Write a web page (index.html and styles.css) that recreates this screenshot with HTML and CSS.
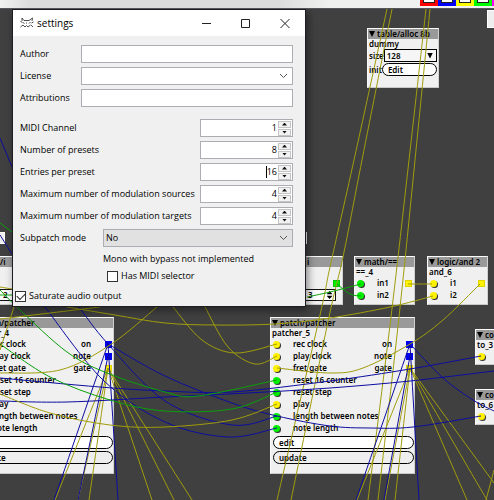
FILE: index.html
```html
<!DOCTYPE html>
<html lang="en">
<head>
<meta charset="utf-8">
<title>settings</title>
<link rel="stylesheet" href="styles.css">
</head>
<body>
<header class="toolbar">
  <div class="swatches">
    <button class="swatch red" aria-label="Red"></button>
    <button class="swatch blue" aria-label="Blue"></button>
    <button class="swatch yellow" aria-label="Yellow"></button>
    <button class="swatch green" aria-label="Green"></button>
    <button class="swatch magenta" aria-label="Magenta"></button>
  </div>
</header>
<main class="canvas">
  <div class="panel panel-corner"></div>
  <div class="panel panel-left"></div>
  <div class="panel panel-mid"></div>

  <section class="node node-table">
    <h2><i class="tri"></i>table/alloc 8b</h2>
    <p class="name">dummy</p>
    <div class="field"><label for="size">size</label>
      <span class="picker"><select id="size"><option>128</option></select><i class="tri"></i></span></div>
    <div class="field"><span>init</span><button class="pill">Edit</button></div>
  </section>

  <section class="node node-cut-left">
    <h2>/i</h2>
    <p class="name">&nbsp;</p>
    <div class="row"></div>
    <div class="count"><span>2</span></div>
  </section>

  <section class="node node-cut-mid">
    <h2>i</h2>
    <p class="name">&nbsp;</p>
    <div class="row"><b class="out green"></b></div>
    <div class="count"><span>3</span><i class="updown"></i></div>
  </section>

  <section class="node node-math">
    <h2><i class="tri"></i>math/==</h2>
    <p class="name">==_4</p>
    <div class="row"><b class="in green"></b><span>in1</span><b class="out yellow"></b></div>
    <div class="row"><b class="in green"></b><span>in2</span></div>
  </section>

  <section class="node node-logic">
    <h2><i class="tri"></i>logic/and 2</h2>
    <p class="name">and_6</p>
    <div class="row"><b class="in yellow"></b><span>i1</span><b class="out yellow"></b></div>
    <div class="row"><b class="in yellow"></b><span>i2</span></div>
  </section>

  <section class="node patcher node-patcher4">
    <h2><i class="tri"></i>patch/patcher</h2>
    <p class="name">patcher_4</p>
    <div class="row"><b class="in yellow"></b><span>rec clock</span><em>on</em><b class="out blue"></b></div>
    <div class="row"><b class="in yellow"></b><span>play clock</span><em>note</em><b class="out blue"></b></div>
    <div class="row"><b class="in yellow"></b><span>fret gate</span><em>gate</em><b class="out yellow"></b></div>
    <div class="row"><b class="in green"></b><span>reset 16 counter</span></div>
    <div class="row"><b class="in green"></b><span>reset step</span></div>
    <div class="row"><b class="in yellow"></b><span>play</span></div>
    <div class="row"><b class="in green"></b><span>length between notes</span></div>
    <div class="row"><b class="in green"></b><span>note length</span></div>
    <button class="pill">edit</button>
    <button class="pill plain">update</button>
  </section>

  <section class="node patcher node-patcher5">
    <h2><i class="tri"></i>patch/patcher</h2>
    <p class="name">patcher_5</p>
    <div class="row"><b class="in yellow"></b><span>rec clock</span><em>on</em><b class="out blue"></b></div>
    <div class="row"><b class="in yellow"></b><span>play clock</span><em>note</em><b class="out blue"></b></div>
    <div class="row"><b class="in yellow"></b><span>fret gate</span><em>gate</em><b class="out yellow"></b></div>
    <div class="row"><b class="in green"></b><span>reset 16 counter</span></div>
    <div class="row"><b class="in green"></b><span>reset step</span></div>
    <div class="row"><b class="in yellow"></b><span>play</span></div>
    <div class="row"><b class="in green"></b><span>length between notes</span></div>
    <div class="row"><b class="in green"></b><span>note length</span></div>
    <button class="pill">edit</button>
    <button class="pill plain">update</button>
  </section>

  <section class="node node-to3">
    <h2><i class="tri"></i>co</h2>
    <p class="name">to_3</p>
    <div class="row"><b class="in yellow"></b></div>
  </section>
  <section class="node node-to6">
    <h2><i class="tri"></i>co</h2>
    <p class="name">to_6</p>
    <div class="row"><b class="in yellow"></b></div>
  </section>

  <svg class="wires" id="wires" aria-hidden="true"></svg>

  <form class="dialog">
    <header class="titlebar">
      <svg class="logo" viewBox="0 0 14 12" aria-hidden="true"><path d="M2 1l2 2.500h5L12.500 1 12 4M2 1v3M.5 4.500l2 1M.5 10l2.500-2M3 5.500l1.500 1M9 6.500L10.500 5M3 8l2 2 1.500-1.500L8 10l2.500-2M13.500 5l-2 1M11 8l2 2M6 6h1"/></svg>
      <h1>settings</h1>
      <button type="button" aria-label="Minimize"><svg viewBox="0 0 10 10"><path d="M0 5.500h9"/></svg></button>
      <button type="button" aria-label="Maximize"><svg viewBox="0 0 10 10"><path d="M.5 1.500h8v8h-8z"/></svg></button>
      <button type="button" aria-label="Close"><svg viewBox="0 0 10 10"><path d="M.5 1l9 9M9.500 1l-9 9"/></svg></button>
    </header>
    <div class="body">
      <div class="line text"><label for="author">Author</label><input id="author" type="text"></div>
      <div class="line text"><label for="license">License</label><span class="combo"><select id="license"><option></option></select><svg viewBox="0 0 9 6"><path d="M1 1l3.500 3.500L8 1"/></svg></span></div>
      <div class="line text"><label for="attributions">Attributions</label><input id="attributions" type="text"></div>
      <div class="line num first"><label for="midi">MIDI Channel</label><span class="spin"><input id="midi" type="number" value="1"><span class="steps"><button type="button" aria-label="Up"></button><button type="button" aria-label="Down"></button></span></span></div>
      <div class="line num"><label for="presets">Number of presets</label><span class="spin"><input id="presets" type="number" value="8"><span class="steps"><button type="button" aria-label="Up"></button><button type="button" aria-label="Down"></button></span></span></div>
      <div class="line num"><label for="entries">Entries per preset</label><span class="spin active"><input id="entries" type="number" value="16"><span class="steps"><button type="button" aria-label="Up"></button><button type="button" aria-label="Down"></button></span></span></div>
      <div class="line num"><label for="sources">Maximum number of modulation sources</label><span class="spin"><input id="sources" type="number" value="4"><span class="steps"><button type="button" aria-label="Up"></button><button type="button" aria-label="Down"></button></span></span></div>
      <div class="line num"><label for="targets">Maximum number of modulation targets</label><span class="spin"><input id="targets" type="number" value="4"><span class="steps"><button type="button" aria-label="Up"></button><button type="button" aria-label="Down"></button></span></span></div>
      <div class="line mode"><label for="mode">Subpatch mode</label><span class="combo grey"><select id="mode"><option>No</option></select><svg viewBox="0 0 9 6"><path d="M1 1l3.500 3.500L8 1"/></svg></span></div>
      <p class="note">Mono with bypass not implemented</p>
      <label class="check inset"><input type="checkbox">Has MIDI selector</label>
    </div>
    <label class="check saturate"><input type="checkbox" checked>Saturate audio output</label>
  </form>
</main>
<script src="script.js"></script>
</body>
</html>
```
FILE: styles.css
```css
* { box-sizing: border-box; }
body {
  margin: 0;
  min-height: 100vh;
  display: flex;
  flex-direction: column;
  font: 9px/12px "Open Sans", sans-serif;
  color: #000;
  background: #404040;
}
h1, h2, p { margin: 0; font: inherit; }
button, input, select { font: inherit; color: inherit; margin: 0; padding: 0; border: 0; background: none; }

.toolbar {
  height: 9px;
  background: #f0f0f0 linear-gradient(90deg, #f0f0f0, #dcdcdc 30px, #dcdcdc 280px, #f0f0f0 330px);
  border-bottom: 1px solid #55555c;
}
.swatches { display: flex; justify-content: flex-end; margin-right: -16px; }
.swatch { width: 18px; height: 6px; display: flex; justify-content: center; }
.swatch::before { content: ""; width: 10px; height: 2px; background: #fff; border: 1px solid #222; border-top: 0; }
.swatch.red { background: #f00; }
.swatch.blue { background: #00f; }
.swatch.yellow { background: #ff0; }
.swatch.green { background: #0f0; }
.swatch.magenta { background: #f0f; }

.canvas { position: relative; flex: 1; overflow: hidden; }
.wires { position: absolute; inset: 0; width: 100%; height: 100%; }
.wires path { fill: none; stroke-width: 1; }
.wires .y { stroke: #a09d0c; }
.wires .b { stroke: #0c0ca0; }
.wires .g { stroke: #0aa00a; }

.panel { position: absolute; background: #eee; border: 1px solid #fff; }
.panel-corner { left: 487px; top: 1px; width: 20px; height: 18px; }
.panel-left { left: -12px; top: 223px; width: 17px; height: 12px; }
.panel-mid { left: 290px; top: 223px; width: 17px; height: 12px; background: #aaa; }

.node {
  position: absolute;
  background: #f0f0f0;
  border: 1px solid #fafafa;
  border-right-color: #d0d0d0;
  border-bottom-color: #c8c8c8;
  font-family: "Noto Sans", sans-serif;
  font-size: 8px;
  font-weight: 600;
  white-space: nowrap;
}
.node h2 { height: 10px; line-height: 10px; background: #999; padding-left: 1px; display: flex; align-items: center; gap: 2px; }
.node .name { height: 10px; line-height: 10px; padding-left: 1px; }
.tri { width: 6px; height: 6px; background: #000; clip-path: polygon(0 0, 100% 0, 50% 100%); }
.row { display: flex; align-items: center; height: 12px; padding: 0 2px; }
.row .in { width: 7px; height: 7px; border-radius: 50%; box-shadow: 1px 1px 0 #333; margin-right: 13px; }
.row .out { width: 7px; height: 7px; margin-left: auto; }
.row em { font-style: normal; margin-left: auto; }
.row em + .out { margin-left: 14px; }
.row .green { background: #00f000; }
.row .yellow { background: #fff200; }
.row .blue { background: #0000f0; }
.row .out.yellow { border: 1px solid #e0d400; }
.row .out.green { border: 1px solid #00c800; }
.pill { display: block; text-align: left; border: 1px solid #000; border-radius: 7px; background: #fff; height: 13px; line-height: 10px; padding-left: 5px; }
.pill.plain { background: #eee; }
.patcher > .pill { width: 141px; margin: 2px 0 0 2px; }
.patcher { width: 145px; height: 157px; }
.patcher .row { padding-right: 1px; }
.node-patcher4 { left: -31px; top: 308px; }
.node-patcher5 { left: 270px; top: 308px; }
.node-math { left: 354px; top: 247px; width: 61px; height: 49px; }
.node-math .in, .node-logic .in { margin-right: 12px; }
.node-math .row span, .node-logic .row span { padding-left: 1px; }
.node-logic { left: 427px; top: 247px; width: 61px; height: 49px; }
.node-to3 { left: 475px; top: 320px; width: 60px; height: 36px; }
.node-to6 { left: 475px; top: 380px; width: 60px; height: 36px; }
.node-cut-left { left: -2px; top: 247px; width: 38px; height: 49px; }
.node-cut-mid { left: 303px; top: 247px; width: 40px; height: 49px; }
.node-cut-mid h2 { padding-left: 3px; }
.count { display: flex; align-items: center; width: 32px; border: 1px solid #111; background: #fff; height: 12px; padding-left: 3px; gap: 14px; }
.updown { width: 6px; height: 8px; background: #000; clip-path: polygon(50% 0, 100% 40%, 0 40%, 0 60%, 100% 60%, 50% 100%, 0 60%, 0 40%); }
.node-table { left: 367px; top: 19px; width: 72px; height: 60px; }
.field { display: flex; align-items: center; padding: 0 1px; height: 13px; margin-bottom: 1px; }
.field .pill { flex: 1; }
.picker { flex: 1; display: flex; align-items: center; border: 1px solid #000; height: 13px; background: #f6f6f6; padding-right: 3px; }
.picker select { flex: 1; appearance: none; padding-left: 2px; }

.dialog {
  position: absolute;
  left: 12px;
  top: 0;
  width: 294px;
  height: 298px;
  background: #f0f0f0;
  border: 1px solid #1c1c22;
  box-shadow: 2px 3px 8px #0007;
}
.titlebar { display: flex; align-items: center; height: 26px; background: #fff; padding: 0 15px 0 7px; }
.titlebar h1 { flex: 1; font-size: 10px; margin-left: 3px; }
.titlebar button { width: 10px; height: 10px; margin-left: 29px; }
.titlebar svg { display: block; fill: none; stroke: #222; }
.titlebar button svg { width: 10px; height: 10px; }
.titlebar .logo { width: 14px; height: 12px; stroke-width: .8; }

.body { padding: 9px 12px 0 7px; }
.line { display: grid; align-items: center; height: 18px; margin-bottom: 4px; }
.line label { white-space: nowrap; }
.text { grid-template-columns: 61px 1fr; }
.num { grid-template-columns: 1fr 93px; }
.mode { grid-template-columns: 83px 1fr; }
.first { margin-top: 12px; }
.line > input, .combo, .spin { display: flex; align-items: center; width: 100%; height: 18px; background: #fff; border: 1px solid #abadb3; }
.combo { padding-right: 4px; }
.combo select { flex: 1; appearance: none; padding-left: 2px; height: 16px; }
.combo svg { width: 9px; height: 6px; fill: none; stroke: #555; }
.combo.grey { background: #e1e1e1; }
.spin { position: relative; padding-right: 1px; }
.spin input { flex: 1; min-width: 0; text-align: right; appearance: textfield; padding-right: 1px; }
.spin input::-webkit-inner-spin-button { display: none; }
.spin.active::before { content: ""; position: absolute; left: 65px; top: 2px; width: 1px; height: 12px; background: #000; }
.steps { width: 13px; display: grid; gap: 1px; }
.steps button { height: 7px; border: 1px solid #c4c4c4; background: #f2f2f2; display: grid; place-items: center; }
.steps button::before { content: ""; width: 5px; height: 3px; background: #111; clip-path: polygon(50% 0, 100% 100%, 0 100%); }
.steps button + button::before { clip-path: polygon(0 0, 100% 0, 50% 100%); }
.note { padding-left: 83px; margin-top: 6px; }
.check { display: flex; align-items: center; gap: 3px; }
.check input { appearance: none; width: 11px; height: 11px; border: 1px solid #333; background: #fff; }
.check input:checked::before { content: ""; display: block; width: 7px; height: 4px; margin: 1px; border: solid #222; border-width: 0 0 1px 1px; transform: rotate(-45deg); }
.inset { margin: 5px 0 0 87px; }
.saturate { margin: 8px 0 0 2px; }
```
FILE: script.js
```js
// Wires are listed as colour class followed by the points they pass through, in window coordinates.
const TOP = 9;
const wires = [
  ["y", 387,9, 354,160, 330,267, 320,315, 277,500],
  ["y", 392,9, 362,160, 343,257, 329,317, 291,500],
  ["y", 426,9, 409,160, 391,317, 368,500],
  ["y", 430,9, 415,160, 399,317, 378,500],
  ["y", 410,368, 357,500], ["y", 410,368, 385,500], ["y", 410,368, 395,500],
  ["y", 410,368, 467,500], ["y", 410,368, 487,500], ["y", 410,368, 494,483],
  ["b", 410,344, 356,500], ["b", 410,356, 384,500], ["b", 410,344, 419,500],
  ["y", 108,368, 55,500], ["y", 108,368, 78,500], ["y", 108,368, 89,500],
  ["y", 108,368, 152,500], ["y", 108,368, 174,500], ["y", 108,368, 192,500],
  ["b", 108,344, 54,500], ["b", 108,356, 78,500], ["b", 108,344, 118,500],
  ["y", 486,500, 494,470],
  ["b", 410,344, 443,378, 473,400, 494,411],
  ["b", 0,378, 100,387, 165,391, 232,392, 330,381, 410,369, 481,356],
  ["b", 0,401, 67,402, 165,397, 248,393, 330,388, 410,381, 494,371],
  ["b", 108,344, 165,376, 232,403, 277,416, 330,426, 370,428, 413,427, 481,416],
  ["b", 45,307, 103,380, 165,422, 228,437, 277,428],
  ["b", 79,307, 108,344, 165,401, 232,425, 277,416],
  ["b", 0,138, 12,167], ["b", 0,235, 12,254],
  ["g", 0,223, 12,232], ["g", 0,295, 12,295],
  ["g", 0,290, 20,310, 67,352, 107,373, 165,392, 198,396, 277,380],
  ["g", 0,344, 50,377, 110,400, 165,411, 232,409, 277,392],
  ["g", 307,297, 330,292, 361,284], ["g", 337,284, 350,294, 361,296],
  ["y", 408,284, 432,284],
  ["y", 67,307, 115,315, 165,323, 215,325, 275,324, 330,318, 390,307, 433,296],
  ["y", 0,319, 50,313, 100,307],
  ["y", 157,307, 110,345, 60,370, 0,373],
  ["y", 480,284, 443,320, 410,344, 363,368, 330,373, 277,368],
  ["y", 14,307, 0,350], ["y", 0,287, 12,289],
  ["y", 173,307, 202,340, 235,353, 277,344],
  ["y", 205,307, 228,347, 255,364, 277,356],
  ["y", 0,394, 50,413, 110,425, 165,427, 232,420, 277,404]
];

function smooth(values) {
  const p = [];
  for (let i = 0; i < values.length; i += 2) p.push([values[i], values[i + 1] - TOP]);
  let d = "M" + p[0];
  for (let i = 0; i < p.length - 1; i++) {
    const a = p[i - 1] || p[i], b = p[i], c = p[i + 1], e = p[i + 2] || c;
    d += "C" + [b[0] + (c[0] - a[0]) / 6, b[1] + (c[1] - a[1]) / 6,
      c[0] - (e[0] - b[0]) / 6, c[1] - (e[1] - b[1]) / 6, c[0], c[1]];
  }
  return d;
}

const svg = document.getElementById("wires");
for (const [color, ...values] of wires) {
  const path = document.createElementNS("http://www.w3.org/2000/svg", "path");
  path.setAttribute("class", color);
  path.setAttribute("d", smooth(values));
  svg.append(path);
}
```
